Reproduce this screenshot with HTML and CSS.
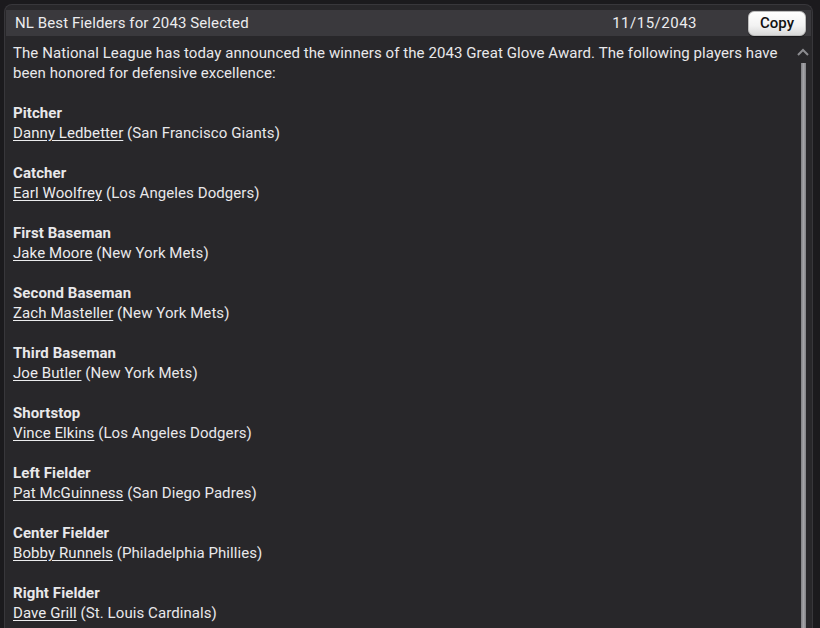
FILE: index.html
```html
<!DOCTYPE html>
<html>
<head>
<meta charset="utf-8">
<link rel="stylesheet" href="styles.css">
</head>
<body>
<div class="frame">
  <div class="panel">
    <div class="header">
      <span class="title">NL Best Fielders for 2043 Selected</span>
      <span class="date">11/15/2043</span>
      <button class="copy">Copy</button>
    </div>
    <div class="content">
      <div class="text">
        <p>The National League has today announced the winners of the 2043 Great Glove Award. The following players have been honored for defensive excellence:</p>
        <div class="award"><b>Pitcher</b><span><a>Danny Ledbetter</a> (San Francisco Giants)</span></div>
        <div class="award"><b>Catcher</b><span><a>Earl Woolfrey</a> (Los Angeles Dodgers)</span></div>
        <div class="award"><b>First Baseman</b><span><a>Jake Moore</a> (New York Mets)</span></div>
        <div class="award"><b>Second Baseman</b><span><a>Zach Masteller</a> (New York Mets)</span></div>
        <div class="award"><b>Third Baseman</b><span><a>Joe Butler</a> (New York Mets)</span></div>
        <div class="award"><b>Shortstop</b><span><a>Vince Elkins</a> (Los Angeles Dodgers)</span></div>
        <div class="award"><b>Left Fielder</b><span><a>Pat McGuinness</a> (San Diego Padres)</span></div>
        <div class="award"><b>Center Fielder</b><span><a>Bobby Runnels</a> (Philadelphia Phillies)</span></div>
        <div class="award"><b>Right Fielder</b><span><a>Dave Grill</a> (St. Louis Cardinals)</span></div>
      </div>
      <div class="scroll">
        <svg class="chev" width="12" height="8" viewBox="0 0 12 8"><path d="M1 7 L6 2 L11 7" fill="none" stroke="#8c8c90" stroke-width="2"/></svg>
        <div class="track"></div>
      </div>
    </div>
  </div>
</div>
</body>
</html>
```

FILE: styles.css
```css
html, body {
  margin: 0;
  padding: 0;
  height: 100%;
  overflow: hidden;
}
body {
  background: #1b1a1d;
  font-family: Roboto, "Liberation Sans", sans-serif;
  font-size: 15px;
  color: #e8e8ea;
}
.frame {
  padding: 4px 7px 0 4px;
  height: 100%;
  box-sizing: border-box;
}
.panel {
  height: 100%;
  box-sizing: border-box;
  background: #28272a;
  border: 1px solid #38373b;
  border-bottom: none;
  border-radius: 8px 8px 0 0;
  display: flex;
  flex-direction: column;
}
.header {
  margin: 5px 1px 0 1px;
  height: 26px;
  background: #3a393d;
  display: flex;
  align-items: center;
  padding-left: 9px;
  padding-right: 5px;
  color: #ececee;
  letter-spacing: 0.1px;
}
.title {
  flex: 1;
}
.date {
  margin-right: 51px;
  letter-spacing: 0.5px;
}
.copy {
  font-family: Roboto, "Liberation Sans", sans-serif;
  font-size: 15px;
  font-weight: 500;
  color: #111;
  height: 25px;
  width: 58px;
  border: 1px solid #bdbdbd;
  border-radius: 6px;
  background: linear-gradient(#ffffff, #f2f2f2 60%, #d8d8d8);
  padding: 0;
  box-shadow: 0 1px 1px rgba(0,0,0,0.4);
}
.content {
  flex: 1;
  display: flex;
  min-height: 0;
}
.text {
  flex: 1;
  padding: 7px 0 0 8px;
  line-height: 20px;
  letter-spacing: 0.08px;
}
.text p {
  margin: 0 0 20px 0;
  width: 775px;
}
.award {
  display: flex;
  flex-direction: column;
  margin-bottom: 20px;
}
.award b {
  font-weight: 700;
}
.award a {
  text-decoration: underline;
  text-underline-offset: 2px;
  color: #ececee;
}
.scroll {
  width: 14px;
  display: flex;
  flex-direction: column;
  align-items: center;
  padding-top: 12px;
  margin-right: 2px;
}
.chev {
  display: block;
}
.track {
  margin-top: 7px;
  width: 5px;
  flex: 1;
  background: linear-gradient(90deg, #7f7f83, #a4a4a8 50%, #7f7f83);
}
```
